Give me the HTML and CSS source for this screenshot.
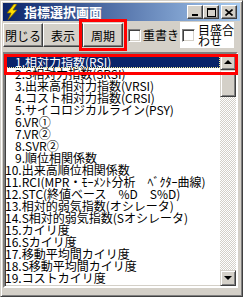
FILE: index.html
```html
<!DOCTYPE html>
<html lang="ja">
<head>
    <meta charset="UTF-8">
    <title>指標選択画面</title>
    <link rel="stylesheet" href="styles.css">
</head>
<body>
    <div class="win">
        <!-- Title bar -->
        <div class="titlebar">
            <svg class="app-icon" width="12" height="16" viewBox="0 0 12 16">
                <polygon points="8,0 1,9 5,9 2,16 11,6 7,6 11,0" fill="#ffe000" stroke="#7a6000" stroke-width="0.8"/>
            </svg>
            <span class="title">指標選択画面</span>
            <div class="tb-btns">
                <span class="tb-btn">
                    <svg width="8" height="9"><rect x="1" y="6" width="6" height="2" fill="#000"/></svg>
                </span>
                <span class="tb-btn">
                    <svg width="9" height="9"><rect x="0.5" y="0.5" width="8" height="8" fill="none" stroke="#000"/><rect x="0" y="0" width="9" height="2" fill="#000"/></svg>
                </span>
                <span class="tb-btn close">
                    <svg width="8" height="7"><path d="M0.5 0.5l7 6M7.5 0.5l-7 6" stroke="#000" stroke-width="1.6"/></svg>
                </span>
            </div>
        </div>

        <!-- Toolbar -->
        <div class="toolbar">
            <button class="btn">閉じる</button>
            <button class="btn">表示</button>
            <button class="btn marked">周期</button>
            <label class="chk"><span class="box"></span><span class="lbl">重書き</span></label>
            <label class="chk white"><span class="box"></span><span class="lbl two">目盛合<br>わせ</span></label>
        </div>

        <!-- List -->
        <div class="listbox">
            <ul class="items">
                <li class="one sel">1.相対力指数(RSI)</li>
                <li class="one">2.S相対力指数(SRSI)</li>
                <li class="one">3.出来高相対力指数(VRSI)</li>
                <li class="one">4.コスト相対力指数(CRSI)</li>
                <li class="one">5.サイコロジカルライン(PSY)</li>
                <li class="one">6.VR①</li>
                <li class="one">7.VR②</li>
                <li class="one">8.SVR②</li>
                <li class="one">9.順位相関係数</li>
                <li>10.出来高順位相関係数</li>
                <li>11.RCI(MPR・ﾓｰﾒﾝﾄ分析　ﾍﾞｸﾀｰ曲線)</li>
                <li>12.STC(終値ベース　%D　S%D)</li>
                <li>13.相対的弱気指数(オシレータ)</li>
                <li>14.S相対的弱気指数(Sオシレータ)</li>
                <li>15.カイリ度</li>
                <li>16.Sカイリ度</li>
                <li>17.移動平均間カイリ度</li>
                <li>18.S移動平均間カイリ度</li>
                <li>19.コストカイリ度</li>
            </ul>
            <div class="scrollbar">
                <span class="sb-btn"><span class="arr up"></span></span>
                <span class="sb-thumb"></span>
                <span class="sb-track"></span>
                <span class="sb-btn"><span class="arr down"></span></span>
            </div>
            <div class="mark-row"></div>
        </div>
    </div>
</body>
</html>
```

FILE: styles.css
```css
body {
    margin: 0;
    background: #d4d0c8;
    font-family: "Noto Sans CJK JP", sans-serif;
    font-size: 12px;
}
.win {
    box-sizing: border-box;
    width: 243px;
    height: 297px;
    padding: 2px;
    background: #d4d0c8;
    border: 1px solid;
    border-color: #d4d0c8 #404040 #404040 #d4d0c8;
    box-shadow: inset 1px 1px #fff, inset -1px -1px #808080;
}
.titlebar {
    height: 18px;
    display: flex;
    align-items: center;
    padding: 0 3px 0 3px;
    background: linear-gradient(to right, #0a246a, #a6caf0);
}
.app-icon {
    display: block;
    margin-right: 6px;
}
.title {
    color: #fff;
    font-weight: bold;
    font-size: 13px;
    line-height: 18px;
}
.tb-btns {
    margin-left: auto;
    display: flex;
}
.tb-btn {
    box-sizing: border-box;
    width: 16px;
    height: 14px;
    display: flex;
    align-items: center;
    justify-content: center;
    background: #d4d0c8;
    border: 1px solid;
    border-color: #fff #404040 #404040 #fff;
    box-shadow: inset -1px -1px #808080;
}
.tb-btn svg {
    display: block;
}
.tb-btn.close {
    margin-left: 2px;
}
.toolbar {
    height: 26px;
    margin-top: 1px;
    display: flex;
    align-items: center;
}
.btn {
    box-sizing: border-box;
    width: 40px;
    height: 24px;
    padding: 0;
    font-family: inherit;
    font-size: 12px;
    color: #000;
    background: #d4d0c8;
    border: 1px solid;
    border-color: #fff #404040 #404040 #fff;
    box-shadow: inset -1px -1px #808080, inset 1px 1px #d4d0c8;
}
.btn.marked {
    outline: 3px solid #ff0000;
    outline-offset: 1px;
}
.chk {
    display: flex;
    align-items: center;
    margin-left: 5px;
}
.box {
    box-sizing: border-box;
    width: 13px;
    height: 13px;
    background: #fff;
    border: 1px solid;
    border-color: #808080 #fff #fff #808080;
    box-shadow: inset 1px 1px #404040, inset -1px -1px #d4d0c8;
}
.lbl {
    margin-left: 2px;
    line-height: 12px;
}
.chk.white {
    margin-left: auto;
    margin-right: 6px;
    width: 54px;
    height: 26px;
    padding-left: 2px;
    box-sizing: border-box;
    background: #fff;
}
.lbl.two {
    margin-left: 3px;
    line-height: 11px;
}
.listbox {
    position: relative;
    box-sizing: border-box;
    height: 236px;
    margin: 4px 2px 0 0;
    display: flex;
    background: #fff;
    border: 2px solid;
    border-color: #808080 #fff #fff #808080;
    box-shadow: inset 1px 1px #404040, inset -1px -1px #d4d0c8;
}
.items {
    flex: 1;
    list-style: none;
    margin: 0;
    padding: 2px 0 0 0;
    overflow: hidden;
}
.items li {
    height: 12px;
    line-height: 12px;
    white-space: nowrap;
    color: #000;
}
.items li.one {
    padding-left: 10px;
}
.items li.sel {
    background: #0a246a;
    color: #fff;
    outline: 1px dotted #f0e890;
    outline-offset: -1px;
}
.scrollbar {
    width: 16px;
    display: flex;
    flex-direction: column;
}
.sb-btn, .sb-thumb {
    box-sizing: border-box;
    width: 16px;
    height: 16px;
    display: flex;
    align-items: center;
    justify-content: center;
    background: #d4d0c8;
    border: 1px solid;
    border-color: #d4d0c8 #404040 #404040 #d4d0c8;
    box-shadow: inset 1px 1px #fff, inset -1px -1px #808080;
}
.sb-thumb {
    height: 27px;
}
.sb-track {
    flex: 1;
    background: repeating-conic-gradient(#fff 0 25%, #d4d0c8 0 50%) 0 0 / 2px 2px;
}
.arr {
    width: 0;
    height: 0;
    border-left: 4px solid transparent;
    border-right: 4px solid transparent;
}
.arr.up {
    border-bottom: 4px solid #000;
}
.arr.down {
    border-top: 4px solid #000;
}
.mark-row {
    position: absolute;
    left: -1px;
    top: 0;
    right: -2px;
    height: 15px;
    border: 3px solid #ff0000;
}
```
